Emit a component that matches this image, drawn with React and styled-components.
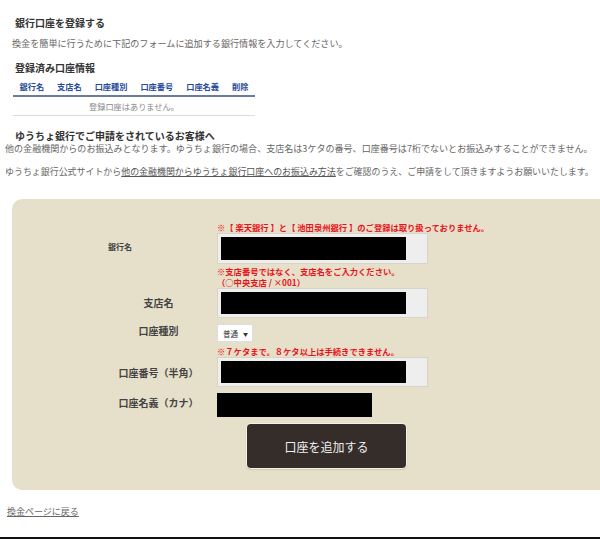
import React from 'react'
import styled, { createGlobalStyle } from 'styled-components'

const GlobalStyle = createGlobalStyle`
  html, body {
    margin: 0;
    padding: 0;
    background: #fff;
    overflow-x: hidden;
  }
  body {
    font-family: "Noto Sans CJK JP", "Noto Sans", sans-serif;
    color: #444;
  }
`

const Page = styled.div`
  width: 600px;
  height: 539px;
  box-sizing: border-box;
  padding-top: 16px;
  border-bottom: 2px solid #111;
  position: relative;
`

const Heading = styled.h2`
  margin: 0 0 0 ${p => p.$indent || 15}px;
  font-size: 10px;
  line-height: 14px;
  font-weight: 700;
  color: #333;
`

const Lead = styled.p`
  margin: 0 0 0 ${p => p.$indent || 5}px;
  margin-top: ${p => p.$top || 0}px;
  font-size: ${p => p.$size || 8.9}px;
  line-height: 12px;
  color: #666;
  white-space: nowrap;

  a {
    color: #555;
    text-decoration: underline;
  }
`

const Table = styled.table`
  margin: 3px 0 0 13px;
  border-collapse: collapse;

  th {
    font-size: 8.2px;
    line-height: 12px;
    font-weight: 700;
    color: #2a4a9a;
    padding: 2px 6.5px 3px;
    text-align: left;
    border-bottom: 2px solid #6a7ba0;
    white-space: nowrap;
  }
  td {
    font-size: 8.2px;
    line-height: 12px;
    color: #888;
    text-align: center;
    padding: 3px 0 3px;
    border-bottom: 1px solid #ddd;
  }
`

const Panel = styled.div`
  margin: 21px 0 0 12px;
  background: #e6dfc9;
  border-radius: 10px 0 0 10px;
  padding: 23px 0 22px 88px;
`

const Form = styled.div`
  display: grid;
  grid-template-columns: 117px 1fr;
  align-items: center;
`

const Label = styled.div`
  grid-column: 1;
  font-size: ${p => (p.$small ? 8 : 10)}px;
  font-weight: 700;
  color: #444;
  text-align: ${p => (p.$small ? 'left' : 'center')};
  padding-left: ${p => (p.$small ? 8 : 0)}px;
  margin-top: ${p => p.$shift || 0}px;
  white-space: nowrap;
`

const Note = styled.div`
  grid-column: 2;
  font-size: 8.3px;
  line-height: 11px;
  font-weight: 700;
  color: #e8141c;
  margin-top: ${p => p.$top || 0}px;
  white-space: nowrap;
`

const Field = styled.div`
  grid-column: 2;
  width: 211px;
  height: ${p => p.$h || 30}px;
  box-sizing: border-box;
  background: #eeeeee;
  border: 1px solid #d8d4c8;
  padding: 3px 21px 3px 3px;
  display: flex;
  margin-top: ${p => p.$top || 0}px;
`

const Redacted = styled.span`
  display: block;
  flex: 1;
  background: #000;
  width: ${p => (p.$w ? `${p.$w}px` : 'auto')};
  height: ${p => (p.$h ? `${p.$h}px` : 'auto')};
`

const Plain = styled.div`
  grid-column: 2;
  margin-top: ${p => p.$top || 0}px;
  display: flex;
`

const Select = styled.div`
  grid-column: 2;
  margin-top: 6px;
  width: 36px;
  height: 18px;
  box-sizing: border-box;
  background: #fff;
  border: 1px solid #ddd;
  display: flex;
  align-items: center;
  justify-content: space-between;
  padding: 0 4px 0 5px;
  font-size: 7.5px;
  color: #333;

  span {
    font-size: 5px;
  }
`

const Submit = styled.button`
  grid-column: 2;
  justify-self: start;
  margin: 7px 0 0 30px;
  width: 159px;
  height: 44px;
  border: none;
  border-radius: 4px;
  background: #352d29;
  color: #eee;
  font-family: "Noto Sans CJK JP", sans-serif;
  font-size: 12px;
  box-shadow: 0 0 0 1px #f4f0e4, 0 1px 2px rgba(0, 0, 0, 0.35);
  cursor: pointer;
`

const Back = styled.a`
  display: inline-block;
  margin: 16px 0 0 7px;
  font-size: 9px;
  line-height: 12px;
  color: #666;
  text-decoration: underline;
`

const columns = ['銀行名', '支店名', '口座種別', '口座番号', '口座名義', '削除']

export default function App() {
  return (
    <Page>
      <GlobalStyle />
      <Heading>銀行口座を登録する</Heading>
      <Lead $indent={12} $top={7} $size={9.1}>
        換金を簡単に行うために下記のフォームに追加する銀行情報を入力してください。
      </Lead>
      <Heading style={{ marginTop: 12 }}>登録済み口座情報</Heading>
      <Table>
        <thead>
          <tr>
            {columns.map(c => (
              <th key={c}>{c}</th>
            ))}
          </tr>
        </thead>
        <tbody>
          <tr>
            <td colSpan={6}>登録口座はありません。</td>
          </tr>
        </tbody>
      </Table>
      <Heading style={{ marginTop: 13 }}>ゆうちょ銀行でご申請をされているお客様へ</Heading>
      <Lead $size={9.05}>
        他の金融機関からのお振込みとなります。ゆうちょ銀行の場合、支店名は3ケタの番号、口座番号は7桁でないとお振込みすることができません。
      </Lead>
      <Lead $top={11} $size={8.95}>
        ゆうちょ銀行公式サイトから<a href="#">他の金融機関からゆうちょ銀行口座へのお振込み方法</a>をご確認のうえ、ご申請をして頂きますようお願いいたします。
      </Lead>

      <Panel>
        <Form>
          <Note>※【 楽天銀行 】と【 池田泉州銀行 】のご登録は取り扱っておりません。</Note>
          <Label $small $shift={-4}>銀行名</Label>
          <Field $h={31}>
            <Redacted />
          </Field>

          <Note $top={2}>
            ※支店番号ではなく、支店名をご入力ください。
            <br />
            （○中央支店 / ×001）
          </Note>
          <Label $shift={-2}>支店名</Label>
          <Field>
            <Redacted />
          </Field>

          <Label>口座種別</Label>
          <Select>
            普通<span>▼</span>
          </Select>

          <Note $top={4}>※７ケタまで。８ケタ以上は手続きできません。</Note>
          <Label>口座番号（半角）</Label>
          <Field>
            <Redacted />
          </Field>

          <Label>口座名義（カナ）</Label>
          <Plain $top={6}>
            <Redacted $w={155} $h={24} style={{ flex: 'none' }} />
          </Plain>

          <Submit type="button">口座を追加する</Submit>
        </Form>
      </Panel>

      <Back href="#">換金ページに戻る</Back>
    </Page>
  )
}
